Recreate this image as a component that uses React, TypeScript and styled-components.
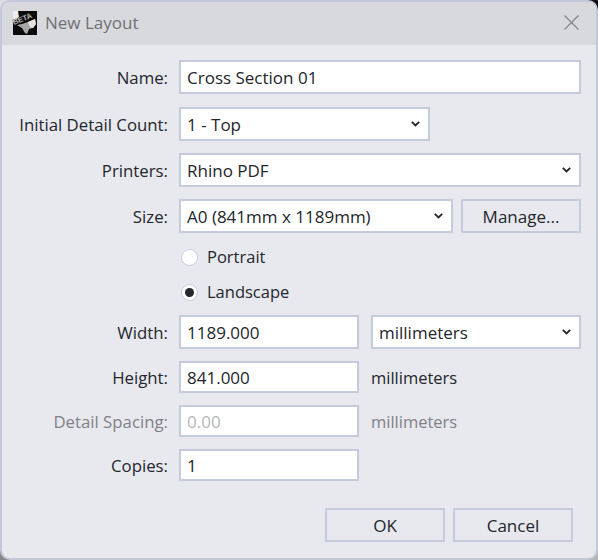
import React from "react";
import styled, { createGlobalStyle } from "styled-components";

const GlobalStyle = createGlobalStyle`
  html, body {
    margin: 0;
    padding: 0;
    width: 598px;
    height: 560px;
    overflow: hidden;
  }
  body {
    background: conic-gradient(#141416 0 25%, #b4b5b8 25% 50%, #86878a 50% 75%, #dcdde2 75%);
  }
  * {
    box-sizing: border-box;
  }
`;

function Chevron() {
  return (
    <svg width="9" height="6" viewBox="0 0 9 6" fill="none">
      <path d="M.8.8l3.7 3.7L8.2.8" stroke="#23262c" strokeWidth="1.8" />
    </svg>
  );
}

function BetaLogo() {
  return (
    <svg width="24" height="24" viewBox="0 0 24 24" overflow="visible">
      <rect width="24" height="24" fill="#0b0b0b" />
      <path d="M0 0h5l1 6-6 5z" fill="#ececec" />
      <path
        d="M4 14l5-1 6-2 7-3 1 5-3 4-4 1-2 5-2-1-3-5z"
        fill="#a8a8a8"
      />
      <path d="M15 11l7-3 1 5-3 4-3-1z" fill="#e4e4e4" />
      <text
        x="1"
        y="14"
        fontFamily="'Liberation Sans', sans-serif"
        fontWeight="700"
        fontSize="7.5"
        fill="#ffffff"
        stroke="#0b0b0b"
        strokeWidth="0.3"
        transform="rotate(-22 1 14)"
      >
        BETA
      </text>
    </svg>
  );
}

type SelectProps = { value: string; width: number };

function Select({ value, width }: SelectProps) {
  return (
    <S.Select $width={width}>
      <span>{value}</span>
      <Chevron />
    </S.Select>
  );
}

export default function App() {
  return (
    <S.Window>
      <GlobalStyle />
      <S.TitleBar>
        <S.TitleGroup>
          <BetaLogo />
          <S.Title>New Layout</S.Title>
        </S.TitleGroup>
        <svg width="15" height="15" viewBox="0 0 15 15" fill="none">
          <path d="M.5.5l14 14M14.5.5l-14 14" stroke="#85868a" strokeWidth="1.3" />
        </svg>
      </S.TitleBar>
      <S.Form>
        <S.Row $spaced>
          <S.Label>Name:</S.Label>
          <S.Fields>
            <S.Input $width={402} value="Cross Section 01" readOnly />
          </S.Fields>
        </S.Row>
        <S.Row>
          <S.Label>Initial Detail Count:</S.Label>
          <S.Fields>
            <Select value="1 - Top" width={251} />
          </S.Fields>
        </S.Row>
        <S.Row>
          <S.Label>Printers:</S.Label>
          <S.Fields>
            <Select value="Rhino PDF" width={402} />
          </S.Fields>
        </S.Row>
        <S.Row>
          <S.Label>Size:</S.Label>
          <S.Fields $gap={8}>
            <Select value="A0 (841mm x 1189mm)" width={274} />
            <S.Button $width={120}>Manage...</S.Button>
          </S.Fields>
        </S.Row>
        <S.RadioGroup>
          <S.RadioRow>
            <S.Radio />
            <S.RadioText>Portrait</S.RadioText>
          </S.RadioRow>
          <S.RadioRow>
            <S.Radio $checked />
            <S.RadioText>Landscape</S.RadioText>
          </S.RadioRow>
        </S.RadioGroup>
        <S.Row>
          <S.Label>Width:</S.Label>
          <S.Fields $gap={12}>
            <S.Input $width={180} value="1189.000" readOnly />
            <Select value="millimeters" width={210} />
          </S.Fields>
        </S.Row>
        <S.Row $short>
          <S.Label>Height:</S.Label>
          <S.Fields $gap={12}>
            <S.Input $width={180} $short value="841.000" readOnly />
            <S.FieldText>millimeters</S.FieldText>
          </S.Fields>
        </S.Row>
        <S.Row $short>
          <S.Label $disabled>Detail Spacing:</S.Label>
          <S.Fields $gap={12}>
            <S.Input $width={180} $short $disabled value="0.00" readOnly />
            <S.FieldText $disabled>millimeters</S.FieldText>
          </S.Fields>
        </S.Row>
        <S.Row $short>
          <S.Label>Copies:</S.Label>
          <S.Fields>
            <S.Input $width={180} $short value="1" readOnly />
          </S.Fields>
        </S.Row>
        <S.Footer>
          <S.Button $width={120}>OK</S.Button>
          <S.Button $width={120}>Cancel</S.Button>
        </S.Footer>
      </S.Form>
    </S.Window>
  );
}

const S = {
  Window: styled.div`
    width: 598px;
    height: 560px;
    display: flex;
    flex-direction: column;
    overflow: hidden;
    border: 2px solid #c0c8da;
    border-radius: 10px;
    background: #e8e9ee;
    font-family: "Open Sans", "Noto Sans", sans-serif;
    font-size: 17px;
    color: #23262c;
  `,
  TitleBar: styled.div`
    height: 43px;
    flex-shrink: 0;
    display: flex;
    align-items: center;
    justify-content: space-between;
    padding: 0 17px 2px 11px;
    background: #d8d9dd;
  `,
  TitleGroup: styled.div`
    display: flex;
    align-items: center;
    gap: 8px;
  `,
  Title: styled.span`
    font-size: 17px;
    color: #6f7074;
  `,
  Form: styled.div`
    display: flex;
    flex-direction: column;
    gap: 12px;
    padding: 15px 15px 0 0;
  `,
  Row: styled.div<{ $short?: boolean; $spaced?: boolean }>`
    display: grid;
    grid-template-columns: 166px 1fr;
    column-gap: 11px;
    align-items: center;
    height: ${({ $short }) => ($short ? 32 : 34)}px;
    margin-bottom: ${({ $spaced }) => ($spaced ? 1 : 0)}px;
  `,
  Fields: styled.div<{ $gap?: number }>`
    display: flex;
    align-items: center;
    gap: ${({ $gap }) => $gap ?? 0}px;
  `,
  Label: styled.label<{ $disabled?: boolean }>`
    text-align: right;
    white-space: nowrap;
    font-size: 16.8px;
    color: ${({ $disabled }) => ($disabled ? "#808186" : "#23262c")};
  `,
  Input: styled.input<{ $width: number; $short?: boolean; $disabled?: boolean }>`
    width: ${({ $width }) => $width}px;
    height: ${({ $short }) => ($short ? 32 : 34)}px;
    padding: 1px 6px 0;
    border: 2px solid #c3cbdc;
    border-radius: 0;
    outline: none;
    background: #ffffff;
    font: inherit;
    color: ${({ $disabled }) => ($disabled ? "#b5b6ba" : "#23262c")};
  `,
  Select: styled.div<{ $width: number }>`
    width: ${({ $width }) => $width}px;
    height: 34px;
    flex-shrink: 0;
    display: flex;
    align-items: center;
    justify-content: space-between;
    padding: 0 8px 0 6px;
    border: 2px solid #c3cbdc;
    background: #ffffff;
  `,
  Button: styled.button<{ $width: number }>`
    width: ${({ $width }) => $width}px;
    height: 34px;
    padding: 0;
    border: 2px solid #c3cbdc;
    border-radius: 0;
    background: #e8e9ee;
    font: inherit;
    color: #23262c;
  `,
  RadioGroup: styled.div`
    display: flex;
    flex-direction: column;
    gap: 11px;
    margin: 0 0 -1px 179px;
  `,
  RadioRow: styled.div`
    display: flex;
    align-items: center;
    gap: 9px;
    height: 24px;
  `,
  Radio: styled.span<{ $checked?: boolean }>`
    width: 17px;
    height: 17px;
    flex-shrink: 0;
    display: flex;
    align-items: center;
    justify-content: center;
    border: 1px solid #c6cbda;
    border-radius: 50%;
    background: #ffffff;
    &::after {
      content: "";
      display: ${({ $checked }) => ($checked ? "block" : "none")};
      width: 9px;
      height: 9px;
      border-radius: 50%;
      background: #26272b;
    }
  `,
  RadioText: styled.span`
    font-size: 16.5px;
    margin-bottom: 1px;
    color: #23262c;
  `,
  FieldText: styled.span<{ $disabled?: boolean }>`
    font-size: 16.5px;
    color: ${({ $disabled }) => ($disabled ? "#808186" : "#23262c")};
  `,
  Footer: styled.div`
    display: flex;
    justify-content: flex-end;
    gap: 8px;
    margin-top: 15px;
    padding-right: 8px;
  `,
};
